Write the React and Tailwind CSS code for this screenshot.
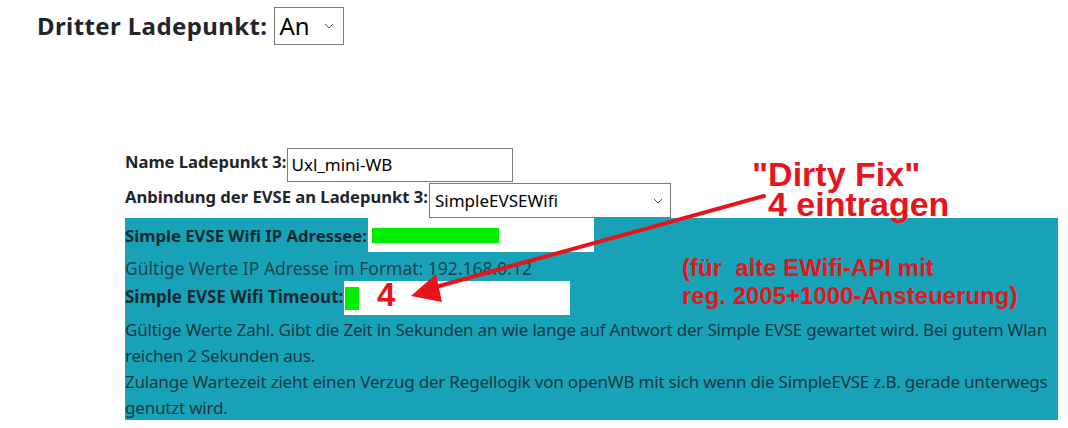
import React from "react";

function Chevron({ className }) {
  return (
    <svg className={className} width="10" height="6" viewBox="0 0 10 6" fill="none">
      <path d="M1 1l4 4 4-4" stroke="#555" strokeWidth="1" />
    </svg>
  );
}

function Annotations() {
  return (
    <div className="pointer-events-none absolute inset-0 font-['Liberation_Sans',Arial,sans-serif] font-bold text-[#e8141b]">
      <div className="absolute left-[752px] top-[160px] text-[34px] leading-[28px]">"Dirty Fix"</div>
      <div className="absolute left-[768px] top-[190px] text-[34px] leading-[28px]">4 eintragen</div>
      <div className="absolute left-[682px] top-[254px] text-[24px] leading-[28px] whitespace-pre">(für  alte EWifi-API mit</div>
      <div className="absolute left-[682px] top-[282px] text-[24px] leading-[28px]">reg. 2005+1000-Ansteuerung)</div>
      <div className="absolute left-[377px] top-[283px] text-[33px] leading-[24px]">4</div>
      <svg className="absolute left-0 top-0" width="1068" height="428" viewBox="0 0 1068 428">
        <line x1="764" y1="196" x2="432" y2="288" stroke="#e8141b" strokeWidth="4" strokeLinecap="round" />
        <polygon points="411,296 436,274 442,302" fill="#e8141b" />
      </svg>
    </div>
  );
}

export default function App() {
  const sans = "font-['Noto_Sans',sans-serif]";
  return (
    <div className={`relative h-[428px] w-[1068px] overflow-hidden bg-white text-[#212529] ${sans}`}>
      {/* Page heading with on/off select */}
      <div className="flex h-[52px] items-start pl-[37px] pt-[7px]">
        <h2 className="mt-[5px] mr-[6px] text-[24px] font-bold leading-[28px] tracking-[0.4px] text-[#1f252b]">Dritter Ladepunkt:</h2>
        <div className="flex h-[38px] w-[70px] items-center justify-between border border-[#7a7a7a] pl-[5px] pr-[9px]">
          <span className="text-[24px] leading-none text-black">An</span>
          <Chevron />
        </div>
      </div>

      <div className="ml-[125px] mt-[96px] w-[933px]">
        {/* Name row */}
        <div className="flex h-[35px] items-start">
          <span className="mt-[3px] text-[16.6px] font-bold leading-[22px]">Name Ladepunkt 3:</span>
          <div className="ml-[1px] flex h-[34px] w-[226px] items-center border border-[#7a7a7a] pl-[3px] text-[17px] text-black">
            Uxl_mini-WB
          </div>
        </div>
        {/* Connection type row */}
        <div className="flex h-[35px] items-start">
          <span className="mt-[3px] text-[16.6px] font-bold leading-[22px]">Anbindung der EVSE an Ladepunkt 3:</span>
          <div className="ml-[1px] flex h-[35px] w-[242px] items-center justify-between border border-[#7a7a7a] pl-[5px] pr-[7px] text-[17px] text-black">
            <span>SimpleEVSEWifi</span>
            <Chevron />
          </div>
        </div>

        {/* SimpleEVSE Wifi settings */}
        <div className="h-[202px] bg-[#18a2b7] text-[#163843]">
          <div className="flex h-[34px] items-start">
            <span className="mt-[7px] text-[16.7px] font-bold leading-[22px] text-[#0f2a33]">Simple EVSE Wifi IP Adressee:</span>
            <div className="ml-[1px] flex h-[34px] w-[226px] items-center bg-white pl-[4px]">
              <div className="h-[15px] w-[127px] bg-[#00ee00]" />
            </div>
          </div>
          <div className="mt-[4px] h-[25px] text-[17.5px] leading-[25px] text-[#1d4450]">Gültige Werte IP Adresse im Format: 192.168.0.12</div>
          <div className="flex h-[34px] items-start">
            <span className="mt-[5px] text-[17px] font-bold leading-[22px] text-[#0f2a33]">Simple EVSE Wifi Timeout:</span>
            <div className="ml-[1px] flex h-[34px] w-[226px] items-center bg-white pl-[1px]">
              <div className="h-[23px] w-[14px] bg-[#00ee00]" />
            </div>
          </div>
          <div className="pt-[2px] text-[17px] leading-[26px] tracking-[-0.2px]">
            <div className="whitespace-nowrap">Gültige Werte Zahl. Gibt die Zeit in Sekunden an wie lange auf Antwort der Simple EVSE gewartet wird. Bei gutem Wlan</div>
            <div className="whitespace-nowrap">reichen 2 Sekunden aus.</div>
            <div className="whitespace-nowrap">Zulange Wartezeit zieht einen Verzug der Regellogik von openWB mit sich wenn die SimpleEVSE z.B. gerade unterwegs</div>
            <div className="whitespace-nowrap">genutzt wird.</div>
          </div>
        </div>
      </div>

      <Annotations />
    </div>
  );
}
